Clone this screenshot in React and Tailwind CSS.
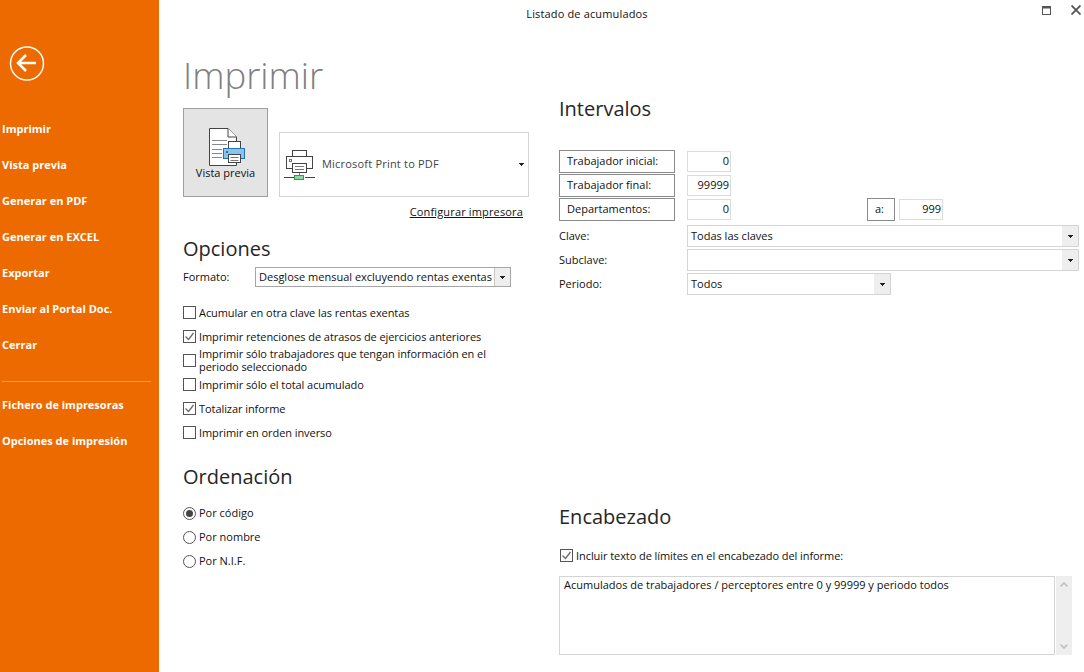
const NAV = ['Imprimir', 'Vista previa', 'Generar en PDF', 'Generar en EXCEL', 'Exportar', 'Enviar al Portal Doc.', 'Cerrar'];
const NAV2 = ['Fichero de impresoras', 'Opciones de impresión'];

const Caret = () => (
  <svg width="5" height="3" viewBox="0 0 5 3" className="block">
    <path d="M0 0h5v1H4v1H3v1H2V2H1V1H0z" fill="#222" />
  </svg>
);

const Check = ({ checked, label }) => (
  <label className="flex items-center gap-[3px] h-6 leading-[13px]">
    <span className="w-[13px] h-[13px] border border-[#555] bg-white shrink-0 flex items-center justify-center">
      {checked && (
        <svg width="11" height="11" viewBox="0 0 11 11">
          <path d="M1.5 5.5L4.5 8.5L9.5 2" fill="none" stroke="#6b6b6b" strokeWidth="1.3" />
        </svg>
      )}
    </span>
    <span className="max-w-[305px] tracking-[-0.07px]">{label}</span>
  </label>
);

const Radio = ({ checked, label }) => (
  <div className="flex items-center gap-[3px] h-6">
    <span className="w-[13px] h-[13px] rounded-full border border-[#555] bg-white shrink-0 flex items-center justify-center">
      {checked && <span className="w-[7px] h-[7px] rounded-full bg-[#444]" />}
    </span>
    <span>{label}</span>
  </div>
);

const Heading = ({ className, children }) => (
  <h2 className={`text-[20px] leading-[28px] text-[#262626] ${className}`}>{children}</h2>
);

const BoxLabel = ({ children, w = 'w-[116px]' }) => (
  <div className={`${w} h-[23px] border border-[#8a8a8a] flex items-center pl-[7px] shrink-0`}>{children}</div>
);

const NumInput = ({ value }) => (
  <div className="w-[44px] h-[21px] border border-[#dcdcdc] flex items-center justify-end pr-px shrink-0">{value}</div>
);

const Select = ({ value, w = 'w-full' }) => (
  <div className={`${w} h-[22px] border border-[#d4d4d4] flex items-center pl-[3px]`}>
    <span className="flex-1">{value}</span>
    <span className="w-4 h-full bg-[#eeeeee] flex items-center justify-center"><Caret /></span>
  </div>
);

const PreviewIcon = () => (
  <svg width="38" height="40" viewBox="0 0 38 40" className="ml-[2px]">
    <path d="M1.5 1.5H20L28.500 10V38.500H1.5Z" fill="#fff" stroke="#444" />
    <path d="M20 1.5V10H28.500" fill="#fff" stroke="#444" />
    <path d="M4 13.500h15M4 17.500h15M4 22.500h10M4 26.500h10M4 30.500h10" stroke="#888" />
    <rect x="20.500" y="14.500" width="12" height="7" fill="#fff" stroke="#444" />
    <rect x="15.500" y="21.500" width="21" height="10" fill="#8cc3ea" stroke="#1f73b7" />
    <rect x="18" y="24" width="2" height="2" fill="#1f73b7" />
    <rect x="20.500" y="27.500" width="12" height="8" fill="#fff" stroke="#444" />
    <path d="M22.500 30.500h8M22.500 33.500h8" stroke="#777" />
  </svg>
);

const PrinterIcon = () => (
  <svg width="31" height="32" viewBox="0 0 31 32">
    <rect x="8.500" y="1.500" width="14" height="6" fill="#fff" stroke="#444" />
    <rect x="2.500" y="7.500" width="26" height="12" fill="#fff" stroke="#444" />
    <rect x="5.500" y="10.500" width="2" height="2" fill="#fff" stroke="#777" />
    <rect x="8.500" y="14.500" width="14" height="9" fill="#fff" stroke="#444" />
    <path d="M11 17.500h9M11 20.500h9" stroke="#777" />
    <path d="M15.500 24v3" stroke="#3fae5a" />
    <path d="M0 28.500h10M21 28.500h10" stroke="#444" />
    <rect x="10.500" y="26.500" width="9" height="4" fill="#8fd6a0" stroke="#2f9e4c" />
  </svg>
);

const App = () => (
  <div className="flex w-[1084px] h-[672px] overflow-hidden bg-white text-[11px] text-[#111] font-['Open_Sans','Noto_Sans',sans-serif]">
    <aside className="w-[159px] shrink-0 bg-[#ec6a00] text-white font-bold pt-[46px]">
      <svg width="36" height="36" viewBox="0 0 36 36" className="ml-[9px] block">
        <circle cx="18" cy="17.500" r="16.500" fill="none" stroke="#fff" strokeWidth="1.500" />
        <path d="M17 9L9 17L17 25M9 17H27" fill="none" stroke="#fff" strokeWidth="2.500" />
      </svg>
      <nav className="mt-[29px] pl-[2px]">
        {NAV.map((item) => (
          <div key={item} className="h-9 flex items-center">{item}</div>
        ))}
        <div className="mt-[18px] mb-[5px] w-[149px] h-px bg-[#f59a4d]" />
        {NAV2.map((item) => (
          <div key={item} className="h-9 flex items-center">{item}</div>
        ))}
      </nav>
    </aside>

    <main className="flex-1 min-w-0 flex flex-col">
      <header className="h-[28px] flex shrink-0">
        <div className="flex-1 text-center leading-[28px] tracking-[0.15px]">Listado de acumulados</div>
        <div className="w-[69px] flex items-start justify-end gap-[19px] pt-[5px] pr-[3px]">
          <svg width="10" height="10" viewBox="0 0 10 10" className="mt-px">
            <rect x="0.500" y="0.500" width="8" height="8" fill="none" stroke="#555" />
            <rect x="0" y="0" width="9" height="2.500" fill="#555" />
          </svg>
          <svg width="10" height="10" viewBox="0 0 10 10">
            <path d="M0.500 0.500L9.500 9.500M9.500 0.500L0.500 9.500" stroke="#555" strokeWidth="1.800" />
          </svg>
        </div>
      </header>

      <div className="flex flex-1 min-h-0">
        <section className="w-[346px] ml-[24px] shrink-0">
          <h1 className="text-[36.500px] leading-[48px] font-light text-[#808080] mt-[23px]">Imprimir</h1>
          <div className="flex items-end gap-[11px] mt-[9px]">
            <div className="w-[85px] h-[89px] border border-[#a0a0a0] bg-[#e4e4e4] flex flex-col items-center pt-[18px]">
              <PreviewIcon />
              <span className="-mt-[2px]">Vista previa</span>
            </div>
            <div className="w-[250px] h-[65px] border border-[#d4d4d4] flex items-center pl-[4px] pr-[4px]">
              <PrinterIcon />
              <span className="ml-[7px] flex-1 text-[#444] tracking-[0.2px]">Microsoft Print to PDF</span>
              <Caret />
            </div>
          </div>
          <div className="text-right pr-[6px] mt-[7px] leading-[16px] underline tracking-[0.15px]">Configurar impresora</div>
          <Heading className="mt-[15px]">Opciones</Heading>
          <div className="flex items-center mt-[4px] h-[20px]">
            <span className="w-[72px]">Formato:</span>
            <div className="w-[256px] h-[20px] border border-[#a6a6a6] flex items-center pl-[3px]">
              <span className="flex-1 whitespace-nowrap">Desglose mensual excluyendo rentas exentas</span>
              <span className="w-4 h-full bg-[#eeeeee] border-l border-[#c8c8c8] flex items-center justify-center"><Caret /></span>
            </div>
          </div>
          <div className="mt-[13px]">
            <Check label="Acumular en otra clave las rentas exentas" />
            <Check checked label="Imprimir retenciones de atrasos de ejercicios anteriores" />
            <Check label="Imprimir sólo trabajadores que tengan información en el periodo seleccionado" />
            <Check label="Imprimir sólo el total acumulado" />
            <Check checked label="Totalizar informe" />
            <Check label="Imprimir en orden inverso" />
          </div>
          <Heading className="mt-[19px]">Ordenación</Heading>
          <div className="mt-[10px]">
            <Radio checked label="Por código" />
            <Radio label="Por nombre" />
            <Radio label="Por N.I.F." />
          </div>
        </section>

        <section className="flex-1 min-w-0 ml-[30px] mr-[5px]">
          <Heading className="mt-[67px]">Intervalos</Heading>
          <div className="mt-[27px] flex flex-col gap-px">
            <div className="flex items-center gap-[12px]"><BoxLabel>Trabajador inicial:</BoxLabel><NumInput value="0" /></div>
            <div className="flex items-center gap-[12px]"><BoxLabel>Trabajador final:</BoxLabel><NumInput value="99999" /></div>
            <div className="flex items-center gap-[12px]">
              <BoxLabel>Departamentos:</BoxLabel>
              <NumInput value="0" />
              <div className="ml-[124px] flex items-center gap-[4px]">
                <BoxLabel w="w-[28px]">a:</BoxLabel>
                <NumInput value="999" />
              </div>
            </div>
          </div>
          <div className="mt-[4px] flex flex-col gap-[2px]">
            <div className="flex items-center"><span className="w-[128px] shrink-0">Clave:</span><Select value="Todas las claves" /></div>
            <div className="flex items-center"><span className="w-[128px] shrink-0">Subclave:</span><Select value="" /></div>
            <div className="flex items-center"><span className="w-[128px] shrink-0">Periodo:</span><Select w="w-[204px]" value="Todos" /></div>
          </div>
          <Heading className="mt-[208px]">Encabezado</Heading>
          <div className="mt-[12px] ml-px"><Check checked label="Incluir texto de límites en el encabezado del informe:" /></div>
          <div className="mt-[9px] flex">
            <div className="w-[496px] h-[79px] border border-[#d4d4d4] px-1">Acumulados de trabajadores / perceptores entre 0 y 99999 y periodo todos</div>
            <div className="ml-px w-4 h-[79px] bg-[#eeeeee] flex flex-col items-center justify-between py-[6px]">
              <svg width="8" height="5" viewBox="0 0 8 5"><path d="M0.500 4.500L4 1L7.500 4.500" fill="none" stroke="#bdbdbd" strokeWidth="1.500" /></svg>
              <svg width="8" height="5" viewBox="0 0 8 5"><path d="M0.500 0.500L4 4L7.500 0.500" fill="none" stroke="#bdbdbd" strokeWidth="1.500" /></svg>
            </div>
          </div>
        </section>
      </div>
    </main>
  </div>
);

export default App;
